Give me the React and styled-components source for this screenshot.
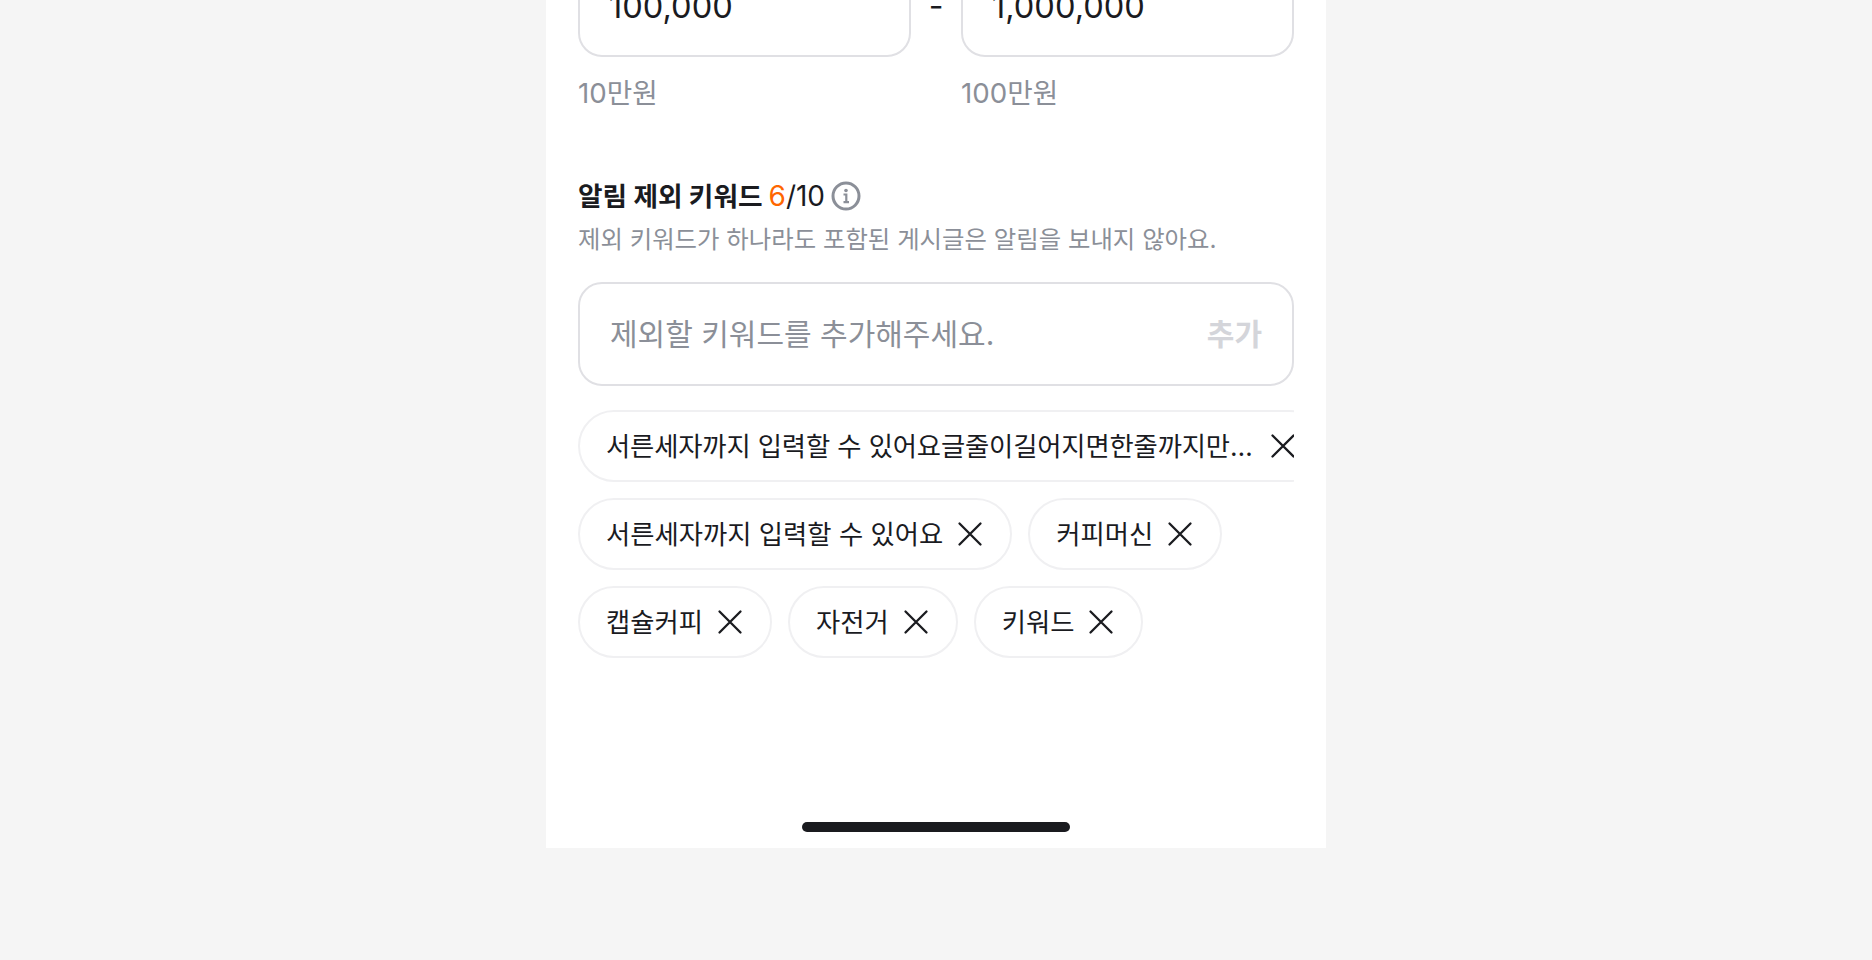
import React from "react";
import styled, { createGlobalStyle } from "styled-components";

const Global = createGlobalStyle`
  html, body { margin: 0; padding: 0; height: 100%; overflow: hidden; background: #f5f5f5; }
  body { font-family: Inter, "Noto Sans CJK KR", sans-serif; color: #1a1b1f; }
  * { box-sizing: border-box; }
`;
const Page = styled.div`
  display: flex;
  justify-content: center;
  height: 960px;
  overflow: hidden;
  background: #f5f5f5;
`;
const Panel = styled.main`
  width: 780px;
  height: 895px;
  margin-top: -47px;
  background: #fff;
  padding: 0 32px;
  display: flex;
  flex-direction: column;
`;
const RangeRow = styled.div`
  display: flex;
  align-items: center;
  justify-content: space-between;
`;
const ValueBox = styled.div`
  width: 333px;
  height: 104px;
  border: 2px solid #e0e0e4;
  border-radius: 24px;
  padding: 2px 29px 0;
  display: flex;
  align-items: center;
  font-size: 32.6px;
  color: #1a1b1f;
`;
const Dash = styled.span`
  font-size: 32px;
  color: #1a1b1f;
`;
const HintRow = styled.div`
  display: flex;
  justify-content: space-between;
  margin-top: 18px;
`;
const Hint = styled.span`
  width: 333px;
  font-size: 27.7px;
  line-height: 36px;
  color: #8b8f98;
`;
const TitleRow = styled.div`
  display: flex;
  align-items: center;
  gap: 6px;
  margin-top: 67px;
  height: 36px;
`;
const Title = styled.h2`
  margin: 0;
  font-size: 26.7px;
  font-weight: 700;
  line-height: 36px;
  color: #1a1b1f;
`;
const Count = styled.span`
  font-size: 28px;
  line-height: 36px;
`;
const Accent = styled.span`
  color: #ff6600;
`;
const Description = styled.p`
  margin: 7px 0 0;
  font-size: 24.4px;
  line-height: 36px;
  color: #8b8f98;
`;
const KeywordField = styled.div`
  height: 104px;
  margin-top: 25px;
  border: 2px solid #e0e0e4;
  border-radius: 24px;
  padding: 0 30px 4px;
  display: flex;
  align-items: center;
  justify-content: space-between;
`;
const Placeholder = styled.span`
  font-size: 30px;
  color: #8b8f98;
`;
const AddLabel = styled.span`
  font-size: 30px;
  font-weight: 600;
  color: #d4d5da;
`;
const Chips = styled.div`
  display: flex;
  flex-wrap: wrap;
  gap: 16px;
  margin-top: 24px;
  overflow: hidden;
`;
const Chip = styled.div`
  display: inline-flex;
  align-items: center;
  height: 72px;
  flex: none;
  border: 2px solid #f0f0f2;
  border-radius: 36px;
  padding: 0 24px 0 26px;
  gap: 11px;
  font-size: 26.35px;
  color: #1a1b1f;
`;
const ChipText = styled.span`
  display: block;
  max-width: 650px;
  padding-bottom: 3px;
  white-space: nowrap;
  overflow: hidden;
  text-overflow: ellipsis;
  letter-spacing: ${(p) => (p.$tight ? "-0.15px" : "0")};
`;
const CloseIcon = styled.svg`
  width: 32px;
  height: 32px;
  flex: none;
`;
const Spacer = styled.div`
  flex: 1;
`;
const HomeBar = styled.div`
  width: 268px;
  height: 10px;
  border-radius: 5px;
  background: #1a1b1f;
  align-self: center;
  margin-bottom: 16px;
`;

const Close = () => (
  <CloseIcon viewBox="0 0 32 32" fill="none" stroke="#1a1b1f" strokeWidth="2.3" strokeLinecap="round">
    <path d="M5.5 5.5 26.5 26.5M26.5 5.5 5.5 26.5" />
  </CloseIcon>
);
const Info = () => (
  <svg width="30" height="30" viewBox="0 0 30 30" fill="none">
    <circle cx="15" cy="15" r="13" stroke="#8b8f98" strokeWidth="3" />
    <circle cx="15" cy="9.5" r="1.8" fill="#8b8f98" />
    <path d="M12.5 13.5H15.3V21M12.5 21.2H18" stroke="#8b8f98" strokeWidth="2.2" />
  </svg>
);

const keywords = [
  "서른세자까지 입력할 수 있어요글줄이길어지면한줄까지만표시됩니다",
  "서른세자까지 입력할 수 있어요",
  "커피머신",
  "캡슐커피",
  "자전거",
  "키워드",
];

export default function App() {
  return (
    <Page>
      <Global />
      <Panel>
        <RangeRow>
          <ValueBox>100,000</ValueBox>
          <Dash>-</Dash>
          <ValueBox>1,000,000</ValueBox>
        </RangeRow>
        <HintRow>
          <Hint>10만원</Hint>
          <Hint>100만원</Hint>
        </HintRow>
        <TitleRow>
          <Title>알림 제외 키워드</Title>
          <Count><Accent>6</Accent>/10</Count>
          <Info />
        </TitleRow>
        <Description>제외 키워드가 하나라도 포함된 게시글은 알림을 보내지 않아요.</Description>
        <KeywordField>
          <Placeholder>제외할 키워드를 추가해주세요.</Placeholder>
          <AddLabel>추가</AddLabel>
        </KeywordField>
        <Chips>
          {keywords.map((k, i) => (
            <Chip key={k}>
              <ChipText $tight={i === 0}>{k}</ChipText>
              <Close />
            </Chip>
          ))}
        </Chips>
        <Spacer />
        <HomeBar />
      </Panel>
    </Page>
  );
}
